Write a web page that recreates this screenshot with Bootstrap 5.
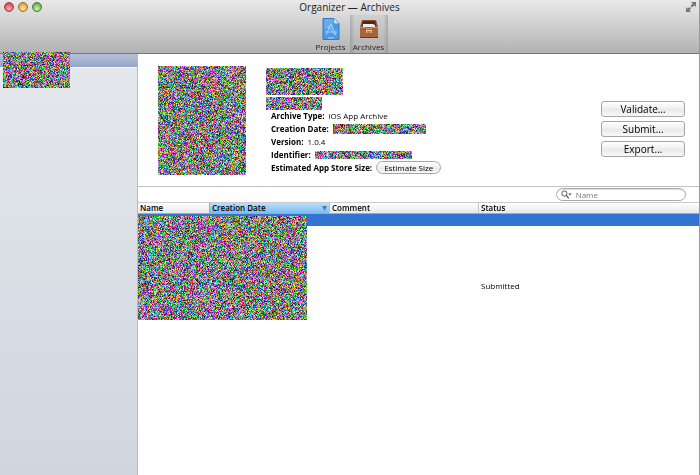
<!DOCTYPE html>
<html lang="en">
<head>
<meta charset="utf-8">
<meta name="viewport" content="width=device-width, initial-scale=1">
<title>Organizer — Archives</title>
<link href="https://cdn.jsdelivr.net/npm/bootstrap@5.3.0/dist/css/bootstrap.min.css" rel="stylesheet">
<style>
body{font-family:"Open Sans","Noto Sans",sans-serif;font-size:8px;line-height:13px;color:#000;background:#fff}
canvas{display:block}
.window{border-right:1px solid #999}
.titlebar{background:linear-gradient(#e9e9e9,#b2b2b2);border-bottom:1px solid #777;height:54px}
.lights{left:4px;top:2px;gap:4px}
.light{width:10px;height:10px;padding:0;border:1px solid;border-radius:50%}
.light-close{background:radial-gradient(circle at 50% 70%,#ffb3b3,#e8404c 70%);border-color:#8d4448}
.light-min{background:radial-gradient(circle at 50% 70%,#ffeb9c,#e7a03c 70%);border-color:#8f6a3b}
.light-zoom{background:radial-gradient(circle at 50% 70%,#d5f5b0,#68b04d 70%);border-color:#4c7540}
.window-title{font-size:10px;line-height:15px;font-weight:400;color:#222}
.tool{width:38px;height:38px;padding:2px 0 0;border:0;background:none;line-height:10px;color:#222}
.tool svg{display:block;margin:0 auto 2px}
.tool.active{background:linear-gradient(90deg,#8888,#aaa3 12%,#aaa3 88%,#8888)}
.expand{right:2px;top:1px;padding:0;border:0;background:none;line-height:0}
.sidebar{width:138px;background:linear-gradient(#e5e8ed,#cfd6df);border-right:1px solid #bbb}
.source{height:14px;background:linear-gradient(#b4c1d8,#94a6c6);border-bottom:1px solid #f3f5f8}
.over-source{left:3px;top:-2px}
.detail{padding:12px 14px 11px 20px;border-bottom:1px solid #c2c2c2}
.info{padding:2px 0 0 20px}
.caption-noise{margin-top:2px}
.facts{padding-left:5px;margin:-1px 0 0}
.facts dt{font-weight:700}
.aqua{border:1px solid #a5a5a5;background:linear-gradient(#fff,#eee 50%,#e8e8e8 51%,#f8f8f8);padding:0 7px;color:#000}
.estimate{border-radius:8px;line-height:11px}
.actions{width:84px;padding-top:35px;gap:4px}
.actions .aqua{border-radius:3px;font-size:10px;line-height:14px;height:16px;padding:0}
.filter{padding:1px 13px 1px 0}
.search{width:130px;height:13px;border:1px solid #aaa;border-radius:7px;padding:0 4px;background:#fff;box-shadow:inset 0 1px 1px #ddd}
.search input{border:0;outline:0;padding:0;min-width:0;background:none;line-height:11px;height:11px}
.search input::placeholder{color:#777;opacity:1}
.archives{table-layout:fixed;border-collapse:separate;border-spacing:0}
.archives th{height:12px;padding:0 2px;line-height:10px;font-weight:600;border-top:1px solid #ccc;border-bottom:1px solid #aaa;border-left:1px solid #c4c4c4;background:linear-gradient(#fff,#e8e8e8)}
.archives th:first-child{border-left:0}
.archives th.sorted{background:linear-gradient(#b9e0fa,#7dbdf0);border-left-color:#7eb3dc}
.archives td{padding:0 3px}
.archives .picked td{height:12px;background:#3374d1}
.archives .entry td{height:118px;vertical-align:middle}
.over-rows{left:0;top:14px}
.c-name{width:71px}.c-date{width:120px}.c-comment{width:149px}
</style>
<script src="https://cdn.jsdelivr.net/npm/bootstrap@5.3.0/dist/js/bootstrap.bundle.min.js"></script>
</head>
<body>
<div class="window d-flex flex-column min-vh-100">
  <header class="titlebar position-relative text-center">
    <div class="lights position-absolute d-flex">
      <button class="light light-close" aria-label="Close"></button>
      <button class="light light-min" aria-label="Minimize"></button>
      <button class="light light-zoom" aria-label="Zoom"></button>
    </div>
    <h1 class="window-title m-0">Organizer — Archives</h1>
    <nav class="d-flex justify-content-center">
      <button class="tool">
        <svg width="20" height="22" viewBox="0 0 20 22" aria-hidden="true"><path d="M2 .5h11l5 5v16H2z" fill="#499be9" stroke="#3778bd"/><path d="M3 1h9v10H3z" fill="#74b8f5" opacity=".6"/><path d="M13 .5v5h5z" fill="#d4ebff" stroke="#5b9bd8" stroke-width=".5"/><path d="M5 17 10 6l5 11M4 14h12M7 8l7 9" fill="none" stroke="#a5d2fb"/><path d="M7 20h6" stroke="#b7d9f7"/></svg>
        <span class="d-block">Projects</span>
      </button>
      <button class="tool active" aria-pressed="true">
        <svg width="20" height="22" viewBox="0 0 20 22" aria-hidden="true"><path d="M3 2h14l2 7H1z" fill="#8c512e"/><path d="M4 3h12l1 5H3z" fill="#4e2b19"/><path d="M4 6h10l2 1v2H4z" fill="#e6edf5"/><path d="M1 9h18v11H1z" fill="#a8633a"/><path d="M1 9.500h5l1 1h6l1-1h5" fill="none" stroke="#d29465"/><path d="M1 19.500h18" stroke="#693a21"/><path d="M7 12h6v3H7z" fill="#f0c795"/><path d="M8 14h4" stroke="#694020"/></svg>
        <span class="d-block">Archives</span>
      </button>
    </nav>
    <button class="expand position-absolute" aria-label="Full screen">
      <svg width="12" height="12" viewBox="0 0 12 12"><path d="M6 1h5v5L9.300 4.300 7 6.500 5.500 5l2.200-2.300zM1 6l1.700 1.700L4.500 6 6 7.500 4.300 9.300 6 11H1z" fill="#777"/></svg>
    </button>
  </header>
  <div class="d-flex flex-grow-1">
    <aside class="sidebar flex-shrink-0 position-relative">
      <div class="source"></div>
      <canvas class="over-source position-absolute" width="67" height="36"></canvas>
    </aside>
    <main class="flex-grow-1">
      <section class="detail d-flex">
        <canvas width="88" height="109"></canvas>
        <div class="info flex-grow-1">
          <canvas width="77" height="27"></canvas>
          <canvas class="caption-noise" width="56" height="13"></canvas>
          <dl class="facts">
            <div class="d-flex gap-1"><dt>Archive Type:</dt><dd class="m-0">iOS App Archive</dd></div>
            <div class="d-flex gap-1 align-items-center"><dt>Creation Date:</dt><dd class="m-0"><canvas width="93" height="10"></canvas></dd></div>
            <div class="d-flex gap-1"><dt>Version:</dt><dd class="m-0">1.0.4</dd></div>
            <div class="d-flex gap-1 align-items-center"><dt>Identifier:</dt><dd class="m-0"><canvas width="97" height="8"></canvas></dd></div>
            <div class="d-flex gap-1 align-items-center"><dt>Estimated App Store Size:</dt><dd class="m-0 d-flex"><button class="aqua estimate">Estimate Size</button></dd></div>
          </dl>
        </div>
        <div class="actions d-flex flex-column">
          <button class="aqua">Validate…</button>
          <button class="aqua">Submit…</button>
          <button class="aqua">Export…</button>
        </div>
      </section>
      <div class="filter d-flex justify-content-end">
        <label class="search d-flex align-items-center gap-1">
          <svg width="11" height="9" viewBox="0 0 11 9" aria-hidden="true"><circle cx="3.500" cy="3.500" r="2.700" fill="none" stroke="#555"/><path d="m5.500 5.500 2.500 3" stroke="#555" stroke-width="1.300"/><path d="M7.500 3.500h3.500L9.300 5.500z" fill="#555"/></svg>
          <input type="search" class="flex-grow-1" placeholder="Name" aria-label="Name">
        </label>
      </div>
      <div class="position-relative">
        <table class="archives w-100">
          <colgroup><col class="c-name"><col class="c-date"><col class="c-comment"><col></colgroup>
          <thead><tr><th>Name</th><th class="sorted"><span class="d-flex justify-content-between align-items-center">Creation Date<svg width="5" height="5" viewBox="0 0 5 5" aria-hidden="true"><path d="M0 0h5L2.500 5z" fill="#4a7ea8"/></svg></span></th><th>Comment</th><th>Status</th></tr></thead>
          <tbody>
            <tr class="picked"><td></td><td></td><td></td><td></td></tr>
            <tr class="entry"><td></td><td></td><td></td><td>Submitted</td></tr>
          </tbody>
        </table>
        <canvas class="over-rows position-absolute" width="169" height="104"></canvas>
      </div>
    </main>
  </div>
</div>
<script>
// Fill every redacted area with repeatable coloured noise.
let seed = 12345;
const rnd = () => { seed = (seed * 1664525 + 1013904223) >>> 0; return seed >>> 24; };
document.querySelectorAll('canvas').forEach(c => {
  const g = c.getContext('2d'), d = g.createImageData(c.width, c.height);
  for (let i = 0; i < d.data.length; i += 4) {
    d.data[i] = rnd(); d.data[i + 1] = rnd(); d.data[i + 2] = rnd(); d.data[i + 3] = 255;
  }
  g.putImageData(d, 0, 0);
});
</script>
</body>
</html>
